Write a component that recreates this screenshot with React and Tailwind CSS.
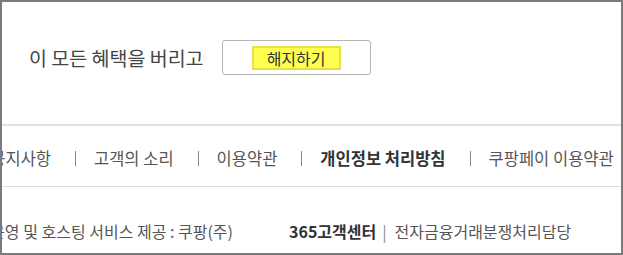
export default function App() {
  const links = [
    { label: "고객의 소리" },
    { label: "이용약관" },
    { label: "개인정보 처리방침", bold: true },
    { label: "쿠팡페이 이용약관" },
  ];

  return (
    <div
      className="w-[623px] h-[255px] overflow-hidden border-2 border-[#7a7a7a] bg-white text-[#555]"
      style={{ fontFamily: '"Noto Sans CJK KR", "Noto Sans", sans-serif' }}
    >
      {/* 해지 영역 */}
      <div className="h-[124px] flex items-start pt-[38px] pl-[27px] border-b-2 border-[#e2e2e2]">
        <p className="text-[19.5px] leading-[35px] text-[#444] whitespace-nowrap">이 모든 혜택을 버리고</p>
        <div className="ml-[18px] w-[149px] h-[35px] flex items-center justify-center rounded-[3px] border border-[#b5b5b5]">
          <span className="w-[89px] h-[24px] flex items-center justify-center bg-[#ffff4f] border-2 border-[#e8e04a] text-[16px] leading-none text-[#333]">
            해지하기
          </span>
        </div>
      </div>

      {/* 하단 링크 */}
      <div className="h-[61px] flex items-center pt-[5px] overflow-hidden border-b border-[#dedede] text-[16.5px] whitespace-nowrap">
        <div className="w-[49px] shrink-0 flex justify-end">
          <span className="shrink-0">공지사항</span>
        </div>
        {links.map((l) => (
          <div key={l.label} className="flex items-center shrink-0">
            <span className="ml-[24px] mr-[18px] w-px h-[15px] bg-[#888]" />
            <span className={l.bold ? "font-bold text-[#333]" : ""}>{l.label}</span>
          </div>
        ))}
      </div>

      {/* 사업자 정보 */}
      <div className="h-[64px] flex items-center pt-[24px] overflow-hidden text-[16px] whitespace-nowrap">
        <div className="w-[231px] shrink-0 flex justify-end">
          <span className="shrink-0">운영 및 호스팅 서비스 제공 : 쿠팡(주)</span>
        </div>
        <span className="ml-[56px] font-bold text-[#333]">365고객센터</span>
        <span className="ml-[6px] mr-[8px] text-[#888]">|</span>
        <span>전자금융거래분쟁처리담당</span>
      </div>
    </div>
  );
}
